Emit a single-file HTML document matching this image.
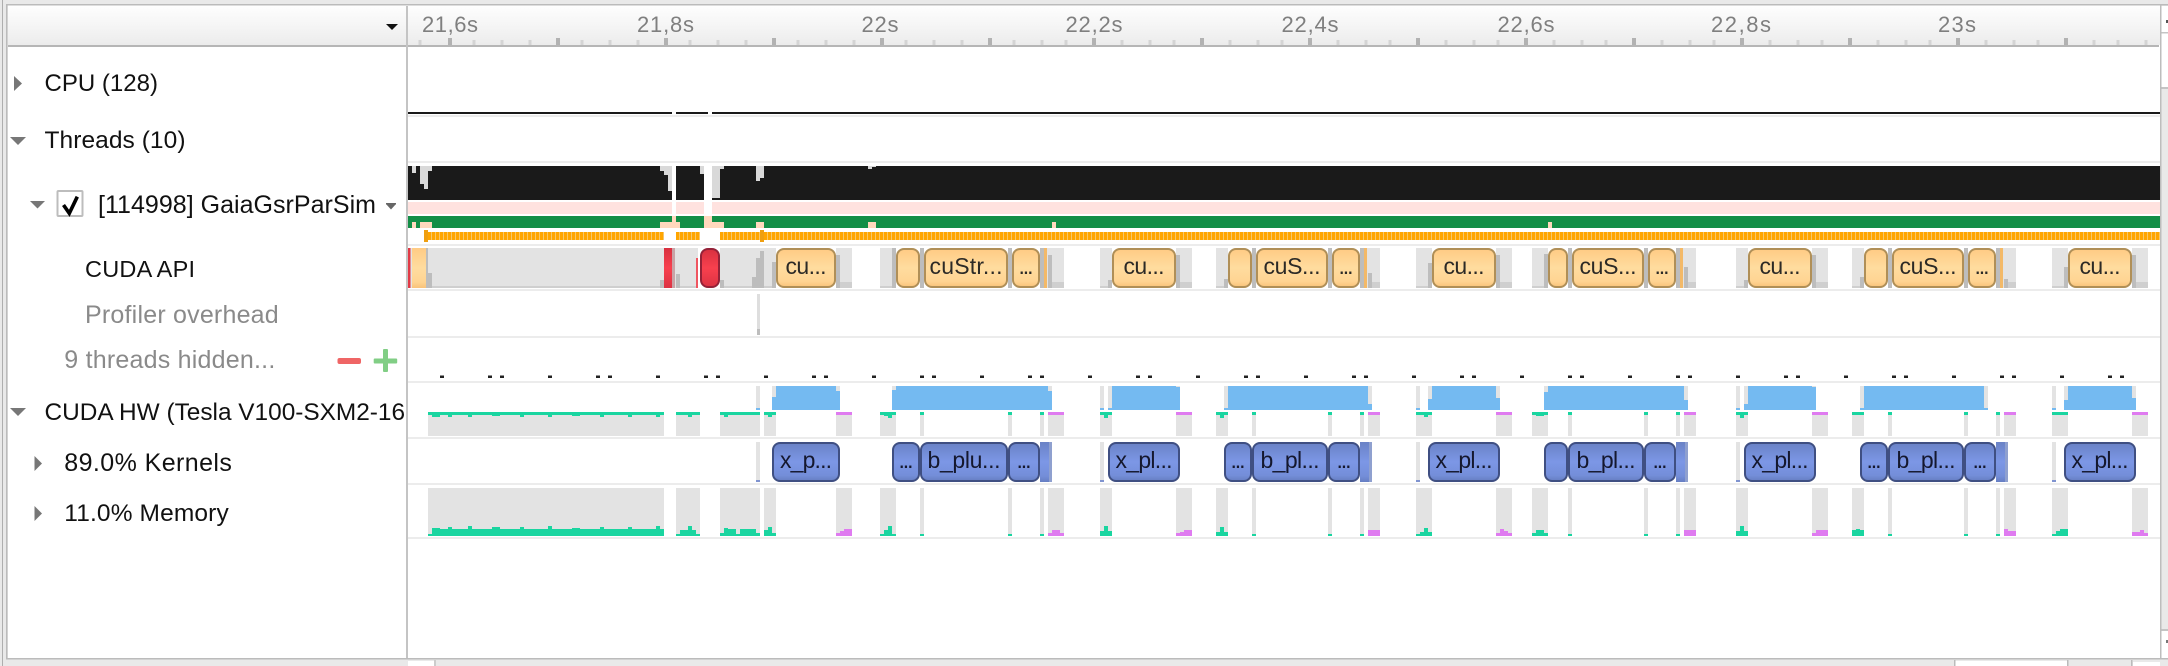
<!DOCTYPE html>
<html><head><meta charset="utf-8"><title>Timeline</title>
<style>
html,body{margin:0;padding:0;background:#e9e9e9;width:2168px;height:666px;overflow:hidden}
svg{display:block}
text{font-family:"Liberation Sans",sans-serif}
.l{font-size:24px;fill:#111}
.g{font-size:25px;fill:#8a8a8a}
.h{font-size:22px;fill:#7f7f7f;text-anchor:middle}
.a{font-size:23px;fill:#2c2a26;text-anchor:middle}
.k{font-size:23px;fill:#15182e;text-anchor:middle}
</style></head><body>
<svg xmlns="http://www.w3.org/2000/svg" width="2168" height="666" viewBox="0 0 2168 666">
<defs>
<linearGradient id="hd" x1="0" y1="0" x2="0" y2="1"><stop offset="0" stop-color="#fefefe"/><stop offset="1" stop-color="#ececec"/></linearGradient>
<linearGradient id="ap" x1="0" y1="0" x2="0" y2="1"><stop offset="0" stop-color="#ffcb84"/><stop offset=".5" stop-color="#ffdc9f"/><stop offset=".85" stop-color="#ffd492"/><stop offset="1" stop-color="#f9c27a"/></linearGradient>
<linearGradient id="kn" x1="0" y1="0" x2="0" y2="1"><stop offset="0" stop-color="#6a82c6"/><stop offset=".5" stop-color="#7c97e6"/><stop offset=".85" stop-color="#748ed9"/><stop offset="1" stop-color="#667ec2"/></linearGradient>
<linearGradient id="rd" x1="0" y1="0" x2="0" y2="1"><stop offset="0" stop-color="#d8303f"/><stop offset=".5" stop-color="#f8404e"/><stop offset="1" stop-color="#dc3343"/></linearGradient>
<pattern id="st" patternUnits="userSpaceOnUse" width="4" height="8" y="232"><rect width="4" height="8" fill="#ffa500"/><rect x="3" width="1" height="8" fill="#f8c667"/></pattern>
<clipPath id="lc"><rect x="8" y="380" width="397" height="60"/></clipPath>
<g id="seg">
<rect x="428" width="236" height="1"/><rect x="676" width="24" height="1"/><rect x="720" width="40" height="1"/><rect x="764" width="12" height="1"/><rect x="836" width="16" height="1"/><rect x="880" width="16" height="1"/><rect x="920" width="4" height="1"/><rect x="1008" width="4" height="1"/><rect x="1040" width="4" height="1"/><rect x="1048" width="16" height="1"/><rect x="1100" width="12" height="1"/><rect x="1176" width="16" height="1"/><rect x="1216" width="12" height="1"/><rect x="1252" width="4" height="1"/><rect x="1328" width="4" height="1"/><rect x="1360" width="4" height="1"/><rect x="1368" width="12" height="1"/><rect x="1416" width="16" height="1"/><rect x="1496" width="16" height="1"/><rect x="1532" width="16" height="1"/><rect x="1568" width="4" height="1"/><rect x="1644" width="4" height="1"/><rect x="1676" width="4" height="1"/><rect x="1684" width="12" height="1"/><rect x="1736" width="12" height="1"/><rect x="1812" width="16" height="1"/><rect x="1852" width="12" height="1"/><rect x="1888" width="4" height="1"/><rect x="1964" width="4" height="1"/><rect x="1996" width="4" height="1"/><rect x="2004" width="12" height="1"/><rect x="2052" width="16" height="1"/><rect x="2132" width="16" height="1"/>
</g>
<g id="tl">
<rect x="428" width="236" height="1"/><rect x="676" width="24" height="1"/><rect x="720" width="40" height="1"/><rect x="764" width="12" height="1"/><rect x="880" width="16" height="1"/><rect x="920" width="4" height="1"/><rect x="1008" width="4" height="1"/><rect x="1040" width="4" height="1"/><rect x="1100" width="12" height="1"/><rect x="1216" width="12" height="1"/><rect x="1252" width="4" height="1"/><rect x="1328" width="4" height="1"/><rect x="1360" width="4" height="1"/><rect x="1416" width="16" height="1"/><rect x="1532" width="16" height="1"/><rect x="1568" width="4" height="1"/><rect x="1644" width="4" height="1"/><rect x="1676" width="4" height="1"/><rect x="1736" width="12" height="1"/><rect x="1852" width="12" height="1"/><rect x="1888" width="4" height="1"/><rect x="1964" width="4" height="1"/><rect x="1996" width="4" height="1"/><rect x="2052" width="16" height="1"/>
</g>
<g id="pk">
<rect x="836" width="16" height="1"/><rect x="1048" width="16" height="1"/><rect x="1176" width="16" height="1"/><rect x="1368" width="12" height="1"/><rect x="1496" width="16" height="1"/><rect x="1684" width="12" height="1"/><rect x="1812" width="16" height="1"/><rect x="2004" width="12" height="1"/><rect x="2132" width="16" height="1"/>
</g>
</defs>

<!-- chrome -->
<rect width="2168" height="666" fill="#e9e9e9"/>
<rect x="8" y="5" width="2152" height="653" fill="#fff"/>
<rect x="8" y="6" width="2152" height="39" fill="url(#hd)"/>
<rect x="8" y="45" width="2151" height="2" fill="#b6b6b6"/>
<rect x="6" y="4" width="2162" height="1.5" fill="#bbb"/>
<rect x="2" y="0" width="1" height="666" fill="#aeaeae"/>
<rect x="6" y="4" width="1.5" height="655" fill="#bbb"/>
<rect x="406" y="6" width="2" height="652" fill="#c4c4c4"/>
<rect x="2161" y="6" width="7" height="26" fill="#fff"/>
<rect x="2161" y="33" width="7" height="54" fill="#fff"/>
<rect x="2161" y="32" width="7" height="1.5" fill="#c4c4c4"/>
<rect x="2161" y="87" width="7" height="2" fill="#c4c4c4"/>
<rect x="2161" y="629" width="7" height="2" fill="#c4c4c4"/>
<rect x="2161" y="631" width="7" height="27" fill="#fff"/>
<rect x="2160" y="5" width="1.5" height="653" fill="#bdbdbd"/>
<rect x="2166" y="20" width="2" height="3" fill="#555"/><rect x="2166" y="640" width="2" height="3" fill="#777"/>
<rect x="6" y="658" width="2162" height="1.5" fill="#bbb"/>
<rect x="408" y="661" width="26" height="5" fill="#fff"/><rect x="434" y="660" width="2" height="6" fill="#ccc"/>
<rect x="1955" y="661" width="112" height="5" fill="#fff"/><rect x="1954" y="660" width="1.5" height="6" fill="#bbb"/><rect x="2067" y="660" width="1.5" height="6" fill="#bbb"/><rect x="2131" y="660" width="1.5" height="6" fill="#bbb"/><rect x="2133" y="662" width="27" height="4" fill="#fff"/>

<!-- header ticks -->
<polygon points="386,24 398,24 392,30" fill="#111"/>
<path shape-rendering="crispEdges" stroke="#b2b2b2" stroke-width="4" fill="none" d="M450 38v7M558 38v7M666 38v7M774 38v7M882 38v7M990 38v7M1094 38v7M1202 38v7M1310 38v7M1418 38v7M1526 38v7M1634 38v7M1742 38v7M1850 38v7M1958 38v7M2066 38v7"/>
<path shape-rendering="crispEdges" stroke="#d4d4d4" stroke-width="3" fill="none" d="M420 40v5M474 40v5M502 40v5M530 40v5M582 40v5M610 40v5M638 40v5M690 40v5M718 40v5M746 40v5M798 40v5M826 40v5M854 40v5M906 40v5M934 40v5M962 40v5M1014 40v5M1042 40v5M1066 40v5M1122 40v5M1150 40v5M1174 40v5M1230 40v5M1258 40v5M1282 40v5M1338 40v5M1366 40v5M1390 40v5M1446 40v5M1474 40v5M1498 40v5M1554 40v5M1582 40v5M1606 40v5M1662 40v5M1690 40v5M1714 40v5M1770 40v5M1798 40v5M1822 40v5M1878 40v5M1906 40v5M1930 40v5M1986 40v5M2014 40v5M2038 40v5M2094 40v5M2118 40v5M2146 40v5"/>
<text class="h" x="450" y="32" textLength="56">21,6s</text>
<text class="h" x="665.5" y="32" textLength="57">21,8s</text>
<text class="h" x="880" y="32" textLength="37">22s</text>
<text class="h" x="1094" y="32" textLength="57">22,2s</text>
<text class="h" x="1310" y="32" textLength="57">22,4s</text>
<text class="h" x="1526" y="32" textLength="57">22,6s</text>
<text class="h" x="1741" y="32" textLength="60">22,8s</text>
<text class="h" x="1957" y="32" textLength="38">23s</text>

<!-- row separators -->
<g fill="#ececec"><rect x="408" y="115" width="1752" height="2"/><rect x="408" y="161" width="1752" height="2"/><rect x="408" y="244" width="1752" height="2"/><rect x="408" y="289" width="1752" height="2"/><rect x="408" y="336" width="1752" height="2"/><rect x="408" y="381" width="1752" height="2"/><rect x="408" y="437" width="1752" height="2"/><rect x="408" y="483" width="1752" height="2"/><rect x="408" y="537" width="1752" height="2"/></g>

<!-- CPU line -->
<g fill="#1a1a1a"><rect x="408" y="112" width="264" height="2"/><rect x="676" y="112" width="32" height="2"/><rect x="712" y="112" width="1448" height="2"/></g>

<!-- thread activity -->
<rect x="408" y="166" width="1752" height="34" fill="#1a1a1a"/>
<path fill="#d9d9d9" d="M412 166h4v7h-4zM420 166h4v18h-4zM424 166h4v23h-4zM428 166h4v5h-4zM660 166h4v5h-4zM664 166h4v9h-4zM668 166h4v25h-4zM700 166h4v8h-4zM712 166h8v32h-8zM720 166h4v3h-4zM756 166h4v15h-4zM760 166h4v12h-4zM868 166h4v3h-4zM872 166h4v1h-4z"/>
<rect x="408" y="202" width="1752" height="12" fill="#ffe2df"/>
<rect x="408" y="216" width="1752" height="12" fill="#128e46"/>
<path fill="#ffd8bd" d="M412 222h4v6h-4zM420 222h12v6h-12zM660 222h20v6h-20zM672 216h4v6h-4zM704 216h8v12h-8zM712 222h12v6h-12zM756 222h8v6h-8zM868 222h8v6h-8zM1052 222h4v6h-4zM1548 222h4v6h-4z"/>
<rect x="672" y="166" width="4" height="48" fill="#fff"/><rect x="704" y="166" width="8" height="48" fill="#fff"/>
<g fill="url(#st)"><rect x="428" y="232" width="236" height="8"/><rect x="676" y="232" width="24" height="8"/><rect x="720" y="232" width="40" height="8"/><rect x="764" y="232" width="1396" height="8"/></g>
<g fill="#ef9f10"><rect x="424" y="230" width="4" height="12"/><rect x="760" y="230" width="4" height="12"/></g>

<!-- CUDA API row -->
<path fill="#e3e3e3" d="M408 248h290v40h-290zM720 248h56v40h-56zM836 248h16v40h-16zM880 248h16v40h-16zM920 248h4v40h-4zM1008 248h4v40h-4zM1040 248h24v40h-24zM1100 248h12v40h-12zM1176 248h16v40h-16zM1216 248h12v40h-12zM1252 248h4v40h-4zM1328 248h4v40h-4zM1360 248h20v40h-20zM1416 248h16v40h-16zM1496 248h16v40h-16zM1532 248h16v40h-16zM1568 248h4v40h-4zM1644 248h4v40h-4zM1676 248h20v40h-20zM1736 248h12v40h-12zM1812 248h16v40h-16zM1852 248h12v40h-12zM1888 248h4v40h-4zM1964 248h4v40h-4zM1996 248h20v40h-20zM2052 248h16v40h-16zM2132 248h16v40h-16z"/>
<path fill="#bdbdbd" d="M426 248h2v40h-2zM428 273h4v15h-4zM660 280h4v8h-4zM676 274h4v14h-4zM720 280h4v8h-4zM752 277h4v11h-4zM756 258h4v30h-4zM760 251h4v37h-4zM772 262h4v26h-4z
M836 255h4v33h-4zM1176 255h4v33h-4zM1496 255h4v33h-4zM1812 255h4v33h-4zM2132 255h4v33h-4z
M892 248h4v40h-4zM1544 254h4v34h-4zM1428 263h4v25h-4zM2064 267h4v21h-4z
M1108 280h4v8h-4zM1224 279h4v9h-4zM1744 280h4v8h-4zM1860 277h4v11h-4z
M920 248h4v40h-4zM1008 248h4v40h-4zM1040 248h4v40h-4zM1252 248h4v40h-4zM1328 248h4v40h-4zM1360 248h4v40h-4zM1568 248h4v40h-4zM1644 248h4v40h-4zM1676 248h4v40h-4zM1888 248h4v40h-4zM1964 248h4v40h-4zM1996 248h4v40h-4z
M1048 255h4v33h-4zM1368 273h4v15h-4zM1684 267h4v21h-4zM2004 279h4v9h-4z"/>
<path fill="#cfcfcf" d="M432 286h228v2h-228zM680 286h16v2h-16zM724 286h28v2h-28zM764 286h8v2h-8z
M840 282h12v6h-12zM1180 282h12v6h-12zM1500 282h12v6h-12zM1816 282h12v6h-12zM2136 282h12v6h-12z
M1052 282h12v6h-12zM1372 282h8v6h-8zM1688 282h8v6h-8zM2008 282h8v6h-8z
M880 286h12v2h-12zM1532 286h12v2h-12zM1416 286h12v2h-12zM2052 286h12v2h-12z
M1100 286h8v2h-8zM1216 286h8v2h-8zM1736 286h8v2h-8zM1852 286h8v2h-8z"/>
<path fill="#f3b968" d="M1044 248h3v40h-3zM1364 248h3v40h-3zM1680 248h3v40h-3zM2000 248h3v40h-3z"/>
<rect x="408" y="248" width="2.5" height="40" fill="#e23a46"/>
<rect x="412" y="248" width="14" height="40" fill="url(#ap)"/>
<rect x="664" y="248" width="8" height="40" fill="url(#rd)"/><rect x="672" y="248" width="3" height="40" fill="#c9a3a6"/>
<rect x="696" y="258" width="2" height="30" fill="#ef5560"/>
<rect x="701" y="249" width="18" height="38" rx="7" fill="url(#rd)" stroke="#952238" stroke-width="2"/>
<g fill="url(#ap)" stroke="#b08f57" stroke-width="2">
<rect x="777" y="249" width="58" height="38" rx="7"/>
<rect x="897" y="249" width="22" height="38" rx="7"/><rect x="925" y="249" width="82" height="38" rx="7"/><rect x="1013" y="249" width="26" height="38" rx="7"/>
<rect x="1113" y="249" width="62" height="38" rx="7"/>
<rect x="1229" y="249" width="22" height="38" rx="7"/><rect x="1257" y="249" width="70" height="38" rx="7"/><rect x="1333" y="249" width="26" height="38" rx="7"/>
<rect x="1433" y="249" width="62" height="38" rx="7"/>
<rect x="1549" y="249" width="18" height="38" rx="7"/><rect x="1573" y="249" width="70" height="38" rx="7"/><rect x="1649" y="249" width="26" height="38" rx="7"/>
<rect x="1749" y="249" width="62" height="38" rx="7"/>
<rect x="1865" y="249" width="22" height="38" rx="7"/><rect x="1893" y="249" width="70" height="38" rx="7"/><rect x="1969" y="249" width="26" height="38" rx="7"/>
<rect x="2069" y="249" width="62" height="38" rx="7"/>
</g>
<text class="a" x="806" y="274" textLength="41">cu...</text>
<text class="a" x="966" y="274" textLength="73">cuStr...</text>
<text class="a" x="1026" y="274" textLength="15">...</text>
<text class="a" x="1144" y="274" textLength="41">cu...</text>
<text class="a" x="1292" y="274" textLength="57">cuS...</text>
<text class="a" x="1346" y="274" textLength="15">...</text>
<text class="a" x="1464" y="274" textLength="41">cu...</text>
<text class="a" x="1608" y="274" textLength="57">cuS...</text>
<text class="a" x="1662" y="274" textLength="15">...</text>
<text class="a" x="1780" y="274" textLength="41">cu...</text>
<text class="a" x="1928" y="274" textLength="57">cuS...</text>
<text class="a" x="1982" y="274" textLength="15">...</text>
<text class="a" x="2100" y="274" textLength="41">cu...</text>

<!-- Profiler overhead -->
<rect x="757" y="294" width="3" height="41" fill="#dedede"/><rect x="757" y="329" width="3" height="6" fill="#bdbdbd"/>

<!-- hidden threads dots -->
<path shape-rendering="crispEdges" stroke="#222" stroke-width="2.5" fill="none" d="M440 376.7h4M488 376.7h4M500 376.7h4M548 376.7h4M596 376.7h4M608 376.7h4M656 376.7h4M704 376.7h4M716 376.7h4M764 376.7h4M812 376.7h4M824 376.7h4M872 376.7h4M920 376.7h4M932 376.7h4M980 376.7h4M1028 376.7h4M1040 376.7h4M1088 376.7h4M1136 376.7h4M1148 376.7h4M1196 376.7h4M1244 376.7h4M1256 376.7h4M1304 376.7h4M1352 376.7h4M1364 376.7h4M1412 376.7h4M1460 376.7h4M1472 376.7h4M1520 376.7h4M1568 376.7h4M1580 376.7h4M1628 376.7h4M1676 376.7h4M1688 376.7h4M1736 376.7h4M1784 376.7h4M1796 376.7h4M1844 376.7h4M1892 376.7h4M1904 376.7h4M1952 376.7h4M2000 376.7h4M2012 376.7h4M2060 376.7h4M2108 376.7h4M2120 376.7h4"/>

<!-- CUDA HW blue row -->
<path fill="#e3e3e3" d="M756 386h4v24h-4zM772 386h4v24h-4zM836 386h4v24h-4zM892 386h4v24h-4zM1048 386h4v24h-4zM1100 386h4v24h-4zM1108 386h4v24h-4zM1176 386h4v24h-4zM1224 386h4v24h-4zM1368 386h4v24h-4zM1416 386h4v24h-4zM1428 386h4v24h-4zM1496 386h4v24h-4zM1544 386h4v24h-4zM1684 386h4v24h-4zM1736 386h4v24h-4zM1744 386h4v24h-4zM1812 386h4v24h-4zM1860 386h4v24h-4zM1984 386h4v24h-4zM2052 386h4v24h-4zM2064 386h4v24h-4zM2132 386h4v24h-4z"/>
<path fill="#74baf1" d="M756 408h4v2h-4zM772 397h4v13h-4zM776 386h60v24h-60zM836 391h4v19h-4zM892 390h4v20h-4zM896 386h152v24h-152zM1048 391h4v19h-4zM1100 408h4v2h-4zM1108 408h4v2h-4zM1112 386h64v24h-64zM1176 387h4v23h-4zM1224 408h4v2h-4zM1228 386h140v24h-140zM1368 404h4v6h-4zM1416 408h4v2h-4zM1428 399h4v11h-4zM1432 386h64v24h-64zM1496 398h4v12h-4zM1544 392h4v18h-4zM1548 386h136v24h-136zM1684 400h4v10h-4zM1736 408h4v2h-4zM1744 404h4v6h-4zM1748 386h64v24h-64zM1812 387h4v23h-4zM1860 408h4v2h-4zM1864 386h120v24h-120zM1984 408h4v2h-4zM2052 408h4v2h-4zM2064 400h4v10h-4zM2068 386h64v24h-64zM2132 398h4v12h-4z"/>

<!-- share row -->
<use href="#seg" fill="#e3e3e3" transform="translate(0,412) scale(1,24)"/>
<use href="#tl" fill="#1ad5a0" transform="translate(0,412) scale(1,3)"/>
<use href="#pk" fill="#df7bf0" transform="translate(0,412) scale(1,3)"/>
<path fill="#1ad5a0" d="M432 415h8v2h-8zM448 415h4v2h-4zM468 415h4v2h-4zM492 415h8v1h-8zM520 415h4v2h-4zM548 415h4v2h-4zM572 415h8v1h-8zM600 415h4v2h-4zM628 415h4v2h-4zM656 415h4v2h-4zM688 415h4v2h-4zM724 415h4v2h-4zM768 415h4v2h-4zM884 415h8v1h-8zM888 416h4v2h-4zM1104 415h4v3h-4zM1220 415h4v3h-4zM1424 415h4v2h-4zM1536 415h8v1h-8zM1740 415h4v3h-4z"/>

<!-- Kernels row -->
<path fill="#e3e3e3" d="M756 442h4v40h-4zM1100 442h4v40h-4zM1416 442h4v40h-4zM1736 442h4v40h-4zM2052 442h4v40h-4z"/>
<path fill="#7f93cf" d="M756 480h4v2h-4zM1100 480h4v2h-4zM1416 480h4v2h-4zM1736 480h4v2h-4zM2052 480h4v2h-4z"/>
<g fill="url(#kn)"><rect x="1040" y="442" width="12" height="40"/><rect x="1360" y="442" width="12" height="40"/><rect x="1676" y="442" width="12" height="40"/><rect x="1996" y="442" width="12" height="40"/></g>
<g fill="#8fa0cf"><rect x="1049" y="442" width="3" height="40"/><rect x="1369" y="442" width="3" height="40"/><rect x="1685" y="442" width="3" height="40"/><rect x="2005" y="442" width="3" height="40"/></g>
<g fill="url(#kn)" stroke="#3f4f82" stroke-width="2">
<rect x="773" y="443" width="66" height="38" rx="7"/>
<rect x="893" y="443" width="26" height="38" rx="7"/><rect x="921" y="443" width="86" height="38" rx="7"/><rect x="1009" y="443" width="30" height="38" rx="7"/>
<rect x="1109" y="443" width="70" height="38" rx="7"/>
<rect x="1225" y="443" width="26" height="38" rx="7"/><rect x="1253" y="443" width="74" height="38" rx="7"/><rect x="1329" y="443" width="30" height="38" rx="7"/>
<rect x="1429" y="443" width="70" height="38" rx="7"/>
<rect x="1545" y="443" width="22" height="38" rx="7"/><rect x="1569" y="443" width="74" height="38" rx="7"/><rect x="1645" y="443" width="30" height="38" rx="7"/>
<rect x="1745" y="443" width="70" height="38" rx="7"/>
<rect x="1861" y="443" width="26" height="38" rx="7"/><rect x="1889" y="443" width="74" height="38" rx="7"/><rect x="1965" y="443" width="30" height="38" rx="7"/>
<rect x="2065" y="443" width="70" height="38" rx="7"/>
</g>
<text class="k" x="806" y="468" textLength="52">x_p...</text>
<text class="k" x="906" y="468" textLength="15">...</text>
<text class="k" x="964" y="468" textLength="73">b_plu...</text>
<text class="k" x="1024" y="468" textLength="15">...</text>
<text class="k" x="1144" y="468" textLength="57">x_pl...</text>
<text class="k" x="1238" y="468" textLength="15">...</text>
<text class="k" x="1290" y="468" textLength="59">b_pl...</text>
<text class="k" x="1344" y="468" textLength="15">...</text>
<text class="k" x="1464" y="468" textLength="57">x_pl...</text>
<text class="k" x="1606" y="468" textLength="59">b_pl...</text>
<text class="k" x="1660" y="468" textLength="15">...</text>
<text class="k" x="1780" y="468" textLength="57">x_pl...</text>
<text class="k" x="1874" y="468" textLength="15">...</text>
<text class="k" x="1926" y="468" textLength="59">b_pl...</text>
<text class="k" x="1980" y="468" textLength="15">...</text>
<text class="k" x="2100" y="468" textLength="57">x_pl...</text>

<!-- Memory row -->
<use href="#seg" fill="#e3e3e3" transform="translate(0,488) scale(1,48)"/>
<path fill="#1ad5a0" d="M428 534h4v2h-4zM432 528h8v8h-8zM440 529h8v7h-8zM448 527h4v9h-4zM452 529h16v7h-16zM468 526h4v10h-4zM472 529h20v7h-20zM492 527h8v9h-8zM500 529h20v7h-20zM520 527h4v9h-4zM524 529h24v7h-24zM548 526h4v10h-4zM552 529h20v7h-20zM572 528h8v8h-8zM580 529h20v7h-20zM600 527h4v9h-4zM604 529h24v7h-24zM628 527h4v9h-4zM632 529h24v7h-24zM656 526h4v10h-4zM660 529h4v7h-4z
M676 534h4v2h-4zM680 530h8v6h-8zM688 526h4v10h-4zM692 530h4v6h-4zM696 534h4v2h-4z
M720 533h4v3h-4zM724 528h4v8h-4zM728 529h8v7h-8zM736 534h4v2h-4zM740 529h16v7h-16zM756 533h4v3h-4z
M764 530h4v6h-4zM768 527h4v9h-4zM772 533h4v3h-4z
M880 534h4v2h-4zM884 530h4v6h-4zM888 526h4v10h-4zM892 534h4v2h-4z
M920 534h4v2h-4zM1008 534h4v2h-4zM1040 534h4v2h-4zM1252 534h4v2h-4zM1328 534h4v2h-4zM1360 534h4v2h-4zM1568 534h4v2h-4zM1644 534h4v2h-4zM1676 534h4v2h-4zM1888 534h4v2h-4zM1964 534h4v2h-4zM1996 534h4v2h-4z
M1100 531h4v5h-4zM1104 526h4v10h-4zM1108 531h4v5h-4z
M1216 532h4v4h-4zM1220 527h4v9h-4zM1224 532h4v4h-4z
M1416 534h4v2h-4zM1420 532h4v4h-4zM1424 528h4v8h-4zM1428 532h4v4h-4z
M1532 533h4v3h-4zM1536 530h8v6h-8zM1544 533h4v3h-4z
M1736 531h4v5h-4zM1740 526h4v10h-4zM1744 531h4v5h-4z
M1852 530h4v6h-4zM1856 529h4v7h-4zM1860 530h4v6h-4z
M2052 534h4v2h-4zM2056 531h4v5h-4zM2060 529h8v7h-8z"/>
<path fill="#df7bf0" d="M836 533h4v3h-4zM840 531h4v5h-4zM844 529h8v7h-8z
M1048 533h4v3h-4zM1052 530h8v6h-8zM1060 533h4v3h-4z
M1176 533h4v3h-4zM1180 532h4v4h-4zM1184 530h8v6h-8z
M1368 530h12v6h-12z
M1496 533h4v3h-4zM1500 529h4v7h-4zM1504 531h4v5h-4zM1508 533h4v3h-4z
M1684 530h12v6h-12z
M1812 533h4v3h-4zM1816 530h12v6h-12z
M2004 529h4v7h-4zM2008 531h8v5h-8z
M2132 532h8v4h-8zM2140 530h4v6h-4zM2144 533h4v3h-4z"/>

<!-- left labels -->
<polygon points="14,76 22,83.5 14,91" fill="#777"/>
<text class="l" x="44.5" y="91" textLength="113.5">CPU (128)</text>
<polygon points="10,137 26,137 18,145" fill="#777"/>
<text class="l" x="44.5" y="148" textLength="141" style="font-size:24.5px">Threads (10)</text>
<polygon points="30,201 45,201 37.5,208.5" fill="#777"/>
<rect x="57.5" y="191" width="25" height="25" rx="1" fill="#fff" stroke="#bdbdbd" stroke-width="2"/>
<polyline points="63.5,205 69.3,213.3 77.3,196.7" fill="none" stroke="#000" stroke-width="3.6"/>
<text class="l" x="98" y="213" textLength="278" style="font-size:25px">[114998] GaiaGsrParSim</text>
<rect x="386" y="203" width="10" height="1.5" fill="#666"/><polygon points="386,204 396,204 391,209.5" fill="#666"/>
<text class="l" x="85" y="277" textLength="110" style="font-size:23.5px">CUDA API</text>
<text class="g" x="85" y="323" textLength="193.7">Profiler overhead</text>
<text class="g" x="64.3" y="368" textLength="211">9 threads hidden...</text>
<rect x="337.5" y="358" width="23.5" height="6" rx="2" fill="#ef6565"/>
<rect x="373.7" y="358.5" width="23.5" height="5" rx="1" fill="#81ce85"/><rect x="383" y="349" width="5" height="23" rx="1" fill="#81ce85"/>
<polygon points="10,408 26,408 18,416" fill="#777"/>
<g clip-path="url(#lc)"><text class="l" x="44.5" y="420" style="font-size:24.4px">CUDA HW (Tesla V100-SXM2-16GB)</text></g>
<polygon points="34.5,456 42,463.5 34.5,471" fill="#777"/>
<text class="l" x="64.3" y="471" textLength="167.6" style="font-size:25px">89.0% Kernels</text>
<polygon points="34.5,506 42,513.5 34.5,521" fill="#777"/>
<text class="l" x="64.3" y="521" textLength="164.4" style="font-size:24.5px">11.0% Memory</text>
</svg>
</body></html>
